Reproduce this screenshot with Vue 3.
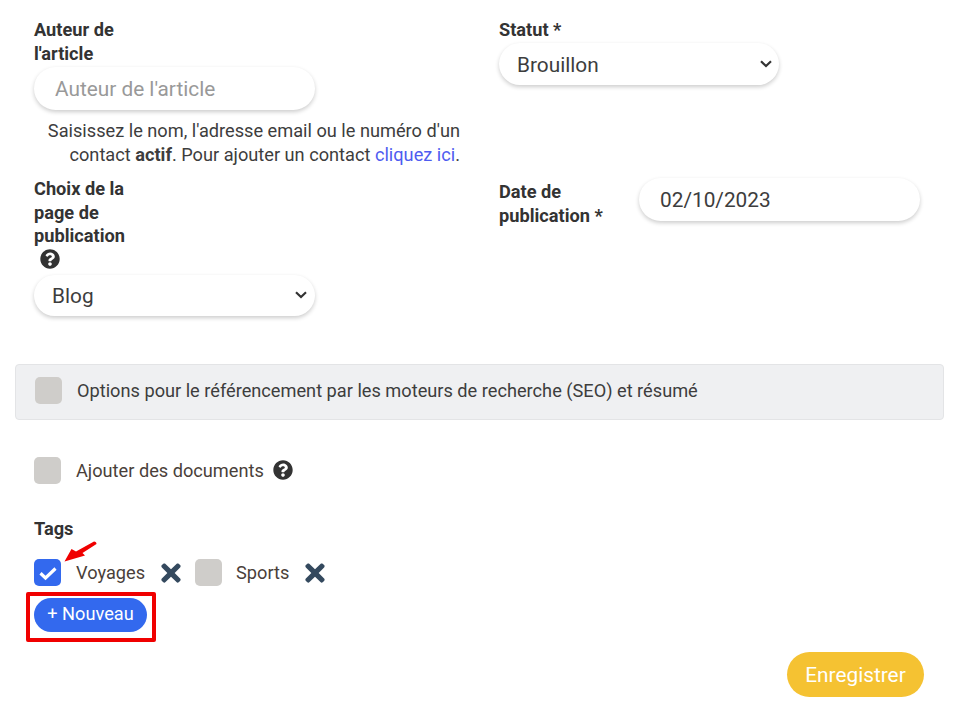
<script setup>
const help = 'M504 256c0 136.997-111.043 248-248 248S8 392.997 8 256C8 119.083 119.043 8 256 8s248 111.083 248 248zM262.655 90c-54.497 0-89.255 22.957-116.549 63.758-3.536 5.286-2.353 12.415 2.715 16.258l34.699 26.31c5.205 3.947 12.621 3.008 16.665-2.122 17.864-22.658 30.113-35.797 57.303-35.797 20.429 0 45.698 13.148 45.698 32.958 0 14.976-12.363 22.667-32.534 33.976C247.128 238.528 216 254.941 216 296v4c0 6.627 5.373 12 12 12h56c6.627 0 12-5.373 12-12v-1.333c0-28.462 83.186-29.647 83.186-106.667 0-58.002-60.165-102-116.531-102zM256 338c-25.365 0-46 20.635-46 46 0 25.364 20.635 46 46 46s46-20.636 46-46c0-25.365-20.635-46-46-46z'
const times = 'M242.72 256l100.07-100.07c12.28-12.28 12.28-32.19 0-44.48l-22.24-22.24c-12.28-12.28-32.19-12.28-44.48 0L176 189.28 75.93 89.21c-12.28-12.28-32.19-12.28-44.48 0L9.21 111.45c-12.28 12.28-12.28 32.19 0 44.48L109.28 256 9.21 356.07c-12.28 12.28-12.28 32.19 0 44.48l22.24 22.24c12.28 12.28 32.2 12.28 44.48 0L176 322.72l100.07 100.07c12.28 12.28 32.2 12.28 44.48 0l22.24-22.24c12.28-12.28 12.28-32.19 0-44.48L242.72 256z'
</script>

<template>
  <div class="page">
    <div class="form-grid">
      <div class="col-author">
        <label class="lbl lbl-narrow">Auteur de l'article</label>
        <input class="field author-input" placeholder="Auteur de l'article" />
        <p class="hint">Saisissez le nom, l'adresse email ou le numéro d'un contact <b>actif</b>. Pour ajouter un contact <a>cliquez ici</a>.</p>
      </div>
      <div class="col-status">
        <label class="lbl">Statut *</label>
        <div class="select-wrap status-wrap">
          <select class="field select"><option>Brouillon</option></select>
          <svg class="chevron" viewBox="0 0 12 8"><path d="M1 1.300 6 6 11 1.300" /></svg>
        </div>
      </div>
      <div class="col-page">
        <label class="lbl lbl-narrow">Choix de la page de publication
          <svg class="help page-help" viewBox="0 0 512 512"><path :d="help" /></svg>
        </label>
        <div class="select-wrap page-wrap">
          <select class="field select"><option>Blog</option></select>
          <svg class="chevron" viewBox="0 0 12 8"><path d="M1 1.300 6 6 11 1.300" /></svg>
        </div>
      </div>
      <div class="col-date">
        <label class="lbl lbl-date">Date de publication *</label>
        <input class="field date-input" value="02/10/2023" />
      </div>
    </div>

    <div class="panel">
      <span class="check"></span>
      <span class="panel-text">Options pour le référencement par les moteurs de recherche (SEO) et résumé</span>
    </div>

    <div class="docs">
      <span class="check"></span>
      <span class="docs-text">Ajouter des documents</span>
      <svg class="help docs-help" viewBox="0 0 512 512"><path :d="help" /></svg>
    </div>

    <div class="tags-title">Tags</div>
    <div class="tags">
      <span class="check on">
        <svg viewBox="0 0 16 16" class="tick"><path d="M2 8.200 6 12 14 4.400" fill="none" stroke="#fff" stroke-width="2.500" /></svg>
      </span>
      <span class="tag-text">Voyages</span>
      <svg class="times" viewBox="0 0 352 512"><path :d="times" /></svg>
      <span class="check"></span>
      <span class="tag-text sports">Sports</span>
      <svg class="times" viewBox="0 0 352 512"><path :d="times" /></svg>
      <svg class="arrow" viewBox="0 0 33 21"><path d="M0.500 20.500 7.500 8 12 10.500 30 0.500Q32.500 0.500 32.500 3L18.500 12 21 14.500Z" fill="#f00000" /></svg>
    </div>
    <div class="new-wrap">
      <button class="new-btn">+ Nouveau</button>
    </div>

    <div class="footer">
      <button class="save">Enregistrer</button>
    </div>
  </div>
</template>

<style scoped>
.page {
  position: relative;
  width: 959px;
  height: 725px;
  box-sizing: border-box;
  padding-top: 18px;
  font-family: Roboto, "Liberation Sans", sans-serif;
  color: #3d3d3d;
  background: #fff;
  overflow: hidden;
}
.form-grid {
  display: grid;
  grid-template-columns: 465px 1fr;
  grid-template-rows: 159px 187px;
  padding-left: 34px;
}
.lbl {
  display: block;
  font-size: 18.200px;
  line-height: 23.660px;
  font-weight: 700;
  color: #333;
}
.lbl-narrow { width: 100px; }
.field {
  display: block;
  box-sizing: border-box;
  border: 0;
  outline: 0;
  background: #fff;
  border-radius: 22px;
  box-shadow: 0 2px 4px rgba(0, 0, 0, 0.2);
  font-family: inherit;
  font-size: 20.800px;
  color: #3d3d3d;
}
.author-input {
  width: 281px;
  height: 43px;
  margin-top: 1.700px;
  padding: 0 21px;
}
.author-input::placeholder { color: #999; opacity: 1; }
.hint {
  width: 426px;
  margin: 8.500px 0 0;
  font-size: 18.200px;
  line-height: 24px;
  text-align: right;
  color: #3d3d3d;
}
.hint b { font-weight: 700; }
.hint a { color: #4f5cf0; }
.select-wrap { position: relative; }
.status-wrap {
  width: 280px;
  height: 42px;
  margin-top: 1.300px;
}
.status-wrap .chevron { right: 7px; }
.page-wrap {
  width: 281px;
  height: 41px;
  margin-top: 6px;
}
.select {
  width: 100%;
  height: 100%;
  padding: 2px 30px 0 18px;
  appearance: none;
}
.chevron {
  position: absolute;
  right: 8px;
  top: 50%;
  width: 12px;
  height: 8px;
  margin-top: -4px;
  fill: none;
  stroke: #333;
  stroke-width: 2.200;
  pointer-events: none;
}
.help {
  display: inline-block;
  width: 20px;
  height: 20px;
  fill: #333;
  flex: none;
}
.page-help {
  display: block;
  margin: 1px 0 0 6px;
}
.docs-help { margin-top: -2px; }
.col-date {
  display: flex;
  align-items: flex-start;
}
.lbl-date {
  width: 140px;
  flex: none;
  margin-top: 3px;
  padding-right: 30px;
  box-sizing: border-box;
}
.date-input {
  width: 281px;
  height: 43px;
  margin-top: 1px;
  padding: 0 21px;
}
.panel {
  display: flex;
  align-items: center;
  box-sizing: border-box;
  width: 929px;
  height: 56px;
  margin: 0 0 0 15px;
  padding: 0 0 3px 19px;
  background: #eff0f2;
  border: 1px solid #e3e4e6;
  border-radius: 4px;
}
.check {
  display: flex;
  align-items: center;
  justify-content: center;
  width: 27px;
  height: 27px;
  flex: none;
  border-radius: 5px;
  background: #cfcdca;
}
.check.on { background: #3369ee; }
.tick { width: 20px; height: 20px; }
.panel-text {
  margin-left: 15px;
  font-size: 18.200px;
  color: #3d3d3d;
}
.docs {
  display: flex;
  align-items: center;
  margin: 37px 0 0 34px;
  height: 27px;
}
.docs-text {
  margin: 0 9px 0 15px;
  font-size: 18.200px;
  color: #4a3f3a;
}
.tags-title {
  margin: 33px 0 0 34px;
  font-size: 18.200px;
  line-height: 24px;
  font-weight: 700;
  color: #333;
}
.tags {
  position: relative;
  display: flex;
  align-items: center;
  height: 27px;
  margin: 18px 0 0 34px;
}
.tag-text {
  margin-left: 15px;
  font-size: 18.200px;
  color: #4a3f3a;
}
.tag-text.sports { margin-left: 14.500px; }
.times {
  width: 22px;
  height: 28px;
  margin: 0 12.500px 0 15px;
  fill: #34495e;
  flex: none;
}
.arrow {
  position: absolute;
  left: 30px;
  top: -18px;
  width: 33px;
  height: 21px;
}
.new-wrap {
  width: 113px;
  margin: 12px 0 0 34px;
  height: 34px;
  position: relative;
}
.new-wrap::after {
  content: "";
  position: absolute;
  left: -8px;
  top: -6.500px;
  width: 129.500px;
  height: 50px;
  box-sizing: border-box;
  border: 4px solid #f00000;
  border-radius: 2px;
}
.new-btn {
  display: block;
  width: 113px;
  height: 34px;
  padding: 0 0 3px;
  border: 0;
  border-radius: 17px;
  background: #3369ee;
  color: #fff;
  font-family: inherit;
  font-size: 18.200px;
}
.footer {
  display: flex;
  justify-content: flex-end;
  margin: 20px 35px 0 0;
}
.save {
  width: 137px;
  height: 45px;
  padding: 0;
  border: 0;
  border-radius: 23px;
  background: #f5c232;
  color: #fff;
  font-family: inherit;
  font-size: 20.800px;
}
</style>
